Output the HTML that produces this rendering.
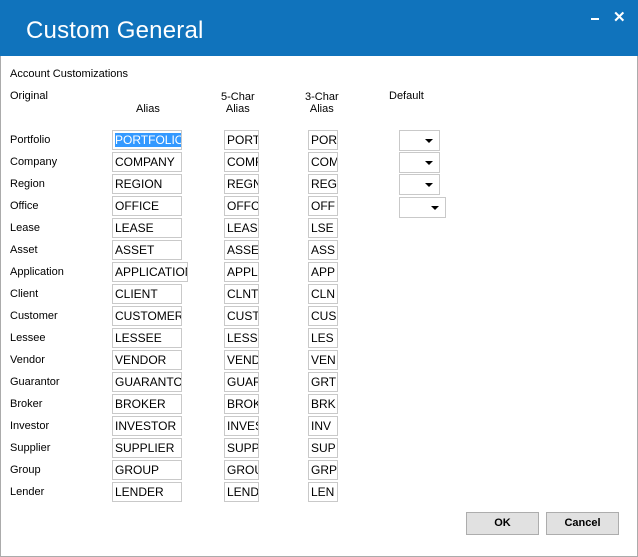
<!DOCTYPE html>
<html><head><meta charset="utf-8"><style>
*{margin:0;padding:0;box-sizing:border-box}
body{width:638px;height:557px;background:#fff;position:relative;overflow:hidden;font-family:"Liberation Sans",Arial,sans-serif;font-size:11px;color:#000}
.win{position:absolute;left:0;top:0;width:638px;height:557px;border:1px solid #ababab;border-top:none}
.tb{position:absolute;left:0;top:0;width:638px;height:56px;background:#1073bc}
.title{position:absolute;left:26px;top:17px;color:#fff;font-size:24px;font-weight:normal;letter-spacing:0.2px}
.min{position:absolute;left:591px;top:18px;width:8px;height:2px;background:#fff}
.x{position:absolute;left:613px;top:8px;color:#fff;font-size:15px;font-weight:bold}
.l{position:absolute;font-size:11px;white-space:nowrap}
.c{text-align:center;line-height:12px}
.box{position:absolute;height:20px;border:1px solid #c9c9c9;background:#fff;overflow:hidden;white-space:nowrap;padding-left:2px;line-height:18px;font-size:12px}
.box span.sel{background:#3399ff;color:#fff}
.dd{position:absolute;height:21px;border:1px solid #c9c9c9;background:#fff}
.dd:after{content:"";position:absolute;right:6px;top:8px;border-left:4px solid transparent;border-right:4px solid transparent;border-top:4px solid #000}
.btn{position:absolute;top:512px;width:73px;height:23px;background:#e1e1e1;border:1px solid #adadad;font-weight:bold;font-size:11px;text-align:center;line-height:21px}
</style></head><body>
<div class="win"></div>
<div class="tb"><div class="title">Custom General</div><div class="min"></div><div class="x">✕</div></div>
<div class="l" style="left:10px;top:68px">Account Customizations</div>
<div class="l" style="left:10px;top:90px">Original</div>
<div class="l" style="left:136px;top:103px">Alias</div>
<div class="l c" style="left:221px;top:91px">5-Char<br>Alias</div>
<div class="l c" style="left:305px;top:91px">3-Char<br>Alias</div>
<div class="l" style="left:389px;top:90px">Default</div>

<div id="rows"></div>
<script>
var d=[["Portfolio","PORTFOLIO","PORT","POR"],["Company","COMPANY","COMF","COM"],["Region","REGION","REGN","REG"],["Office","OFFICE","OFFCI","OFF"],["Lease","LEASE","LEASI","LSE"],["Asset","ASSET","ASSE","ASS"],["Application","APPLICATION","APPL","APP"],["Client","CLIENT","CLNT","CLN"],["Customer","CUSTOMER","CUST","CUS"],["Lessee","LESSEE","LESSI","LES"],["Vendor","VENDOR","VEND","VEN"],["Guarantor","GUARANTOR","GUAR","GRT"],["Broker","BROKER","BROK","BRK"],["Investor","INVESTOR","INVES","INV"],["Supplier","SUPPLIER","SUPP","SUP"],["Group","GROUP","GROU","GRP"],["Lender","LENDER","LEND","LEN"]];
var h="";
d.forEach(function(r,i){var y=130+22*i;
h+='<div class="l" style="left:10px;top:'+(y+4)+'px">'+r[0]+'</div>';
h+='<div class="box" style="left:112px;top:'+y+'px;width:'+(i==6?76:70)+'px">'+(i==0?'<span class="sel">'+r[1]+'</span>':r[1])+'</div>';
h+='<div class="box" style="left:224px;top:'+y+'px;width:35px">'+r[2]+'</div>';
h+='<div class="box" style="left:308px;top:'+y+'px;width:30px">'+r[3]+'</div>';
if(i<4)h+='<div class="dd" style="left:399px;top:'+(y+(i==3?1:0))+'px;width:'+(i==3?47:41)+'px"></div>';
});
document.getElementById("rows").innerHTML=h;
</script>
<div class="btn" style="left:466px">OK</div>
<div class="btn" style="left:546px">Cancel</div>
</body></html>
